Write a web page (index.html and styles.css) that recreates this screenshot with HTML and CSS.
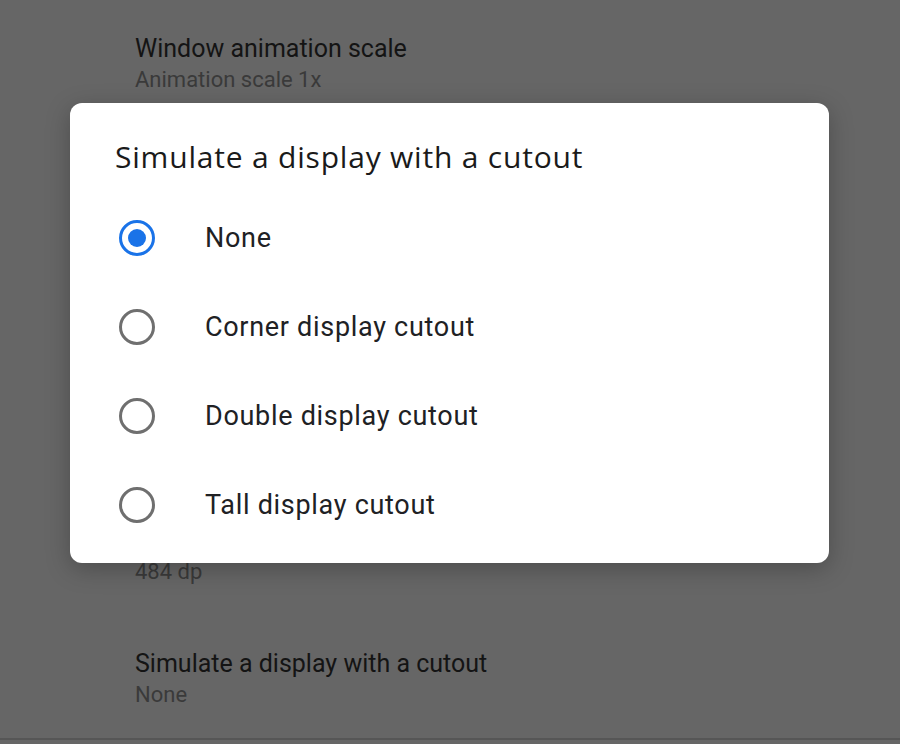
FILE: index.html
```html
<!DOCTYPE html>
<html lang="en">
<head>
    <meta charset="UTF-8">
    <meta name="viewport" content="width=device-width, initial-scale=1.0">
    <title>Developer options - Display cutout</title>
    <link rel="stylesheet" href="styles.css">
</head>
<body>
    <div id="settings-list">
        <div class="setting-item">
            <div class="setting-title">Window animation scale</div>
            <div class="setting-summary">Animation scale 1x</div>
        </div>
        <!-- rows hidden behind the dialog -->
        <div class="covered-rows"></div>
        <div class="setting-item no-title">
            <div class="setting-summary">484 dp</div>
        </div>
        <div class="setting-item">
            <div class="setting-title">Simulate a display with a cutout</div>
            <div class="setting-summary">None</div>
        </div>
    </div>

    <div id="cutout-dialog">
        <h2 class="dialog-title">Simulate a display with a cutout</h2>
        <div class="option-list">
            <label class="option">
                <span class="radio checked"></span>
                <span class="option-label">None</span>
            </label>
            <label class="option">
                <span class="radio"></span>
                <span class="option-label">Corner display cutout</span>
            </label>
            <label class="option">
                <span class="radio"></span>
                <span class="option-label">Double display cutout</span>
            </label>
            <label class="option">
                <span class="radio"></span>
                <span class="option-label">Tall display cutout</span>
            </label>
        </div>
    </div>
</body>
</html>
```

FILE: styles.css
```css
body {
    margin: 0;
    padding: 0;
    background: #666666;
    font-family: 'Roboto', 'Liberation Sans', sans-serif;
    height: 744px;
    overflow: hidden;
    position: relative;
}

#settings-list {
    border-bottom: 2px solid #565656;
}

.setting-item {
    height: 123px;
    box-sizing: border-box;
    padding: 34px 0 0 135px;
}

.setting-item.no-title {
    padding-top: 64px;
}

.covered-rows {
    height: 369px;
}

.setting-title {
    font-size: 25px;
    line-height: 30px;
    color: #141414;
}

.setting-summary {
    font-size: 22px;
    line-height: 32px;
    color: #3a3a3a;
}

/* dialog sits over the dimmed list */
#cutout-dialog {
    position: absolute;
    left: 70px;
    top: 103px;
    width: 759px;
    height: 460px;
    box-sizing: border-box;
    background: #fff;
    border-radius: 12px;
    box-shadow: 0 6px 24px rgba(0, 0, 0, 0.25);
    padding: 36px 0 0 45px;
}

.dialog-title {
    margin: 0 0 18px 0;
    font-family: 'Open Sans', 'Roboto', sans-serif;
    font-weight: normal;
    font-size: 30px;
    letter-spacing: 0.8px;
    line-height: 36px;
    color: #1a1a1a;
}

.option-list {
    display: flex;
    flex-direction: column;
}

.option {
    display: flex;
    align-items: center;
    height: 89px;
    gap: 50px;
    margin-left: 4px;
}

.radio {
    width: 36px;
    height: 36px;
    box-sizing: border-box;
    border: 3px solid #6f6f6f;
    border-radius: 50%;
    display: flex;
    align-items: center;
    justify-content: center;
}

.radio.checked {
    border-color: #1a73e8;
}

.radio.checked:after {
    content: '';
    width: 18px;
    height: 18px;
    border-radius: 50%;
    background: #1a73e8;
}

.option-label {
    font-size: 27px;
    letter-spacing: 0.7px;
    color: #202124;
}
```
